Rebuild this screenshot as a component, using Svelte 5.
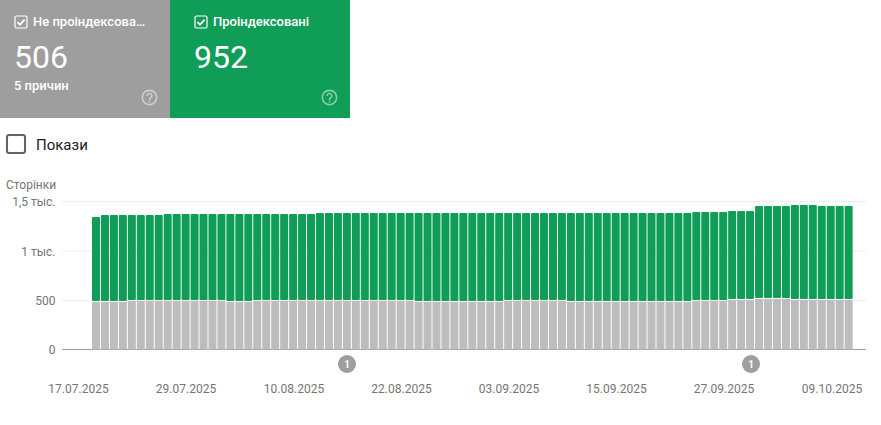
<script>
	const help =
		'M11 18h2v-2h-2v2zm1-16C6.48 2 2 6.48 2 12s4.48 10 10 10 10-4.48 10-10S17.52 2 12 2zm0 18c-4.41 0-8-3.59-8-8s3.59-8 8-8 8 3.59 8 8-3.59 8-8 8zm0-14c-2.21 0-4 1.79-4 4h2c0-1.1.9-2 2-2s2 .9 2 2c0 2-3 1.75-3 5h2c0-2.25 3-2.5 3-5 0-2.21-1.79-4-4-4z';

	const tiles = [
		{ title: 'Не проіндексовані', value: '506', note: '5 причин', cls: 'grey' },
		{ title: 'Проіндексовані', value: '952', note: '', cls: 'green' }
	];

	// [first bar index, pixel y] runs read off the chart
	const topRuns = [[0, 217], [1, 215], [8, 214], [25, 213], [67, 212], [71, 211], [74, 206], [78, 205], [81, 206]];
	const midRuns = [[0, 301], [4, 300], [15, 301], [18, 300], [36, 301], [46, 300], [53, 301], [67, 300], [71, 299], [74, 298], [78, 299]];

	const pick = (runs, i) => runs.filter((r) => r[0] <= i).pop()[1];
	const baseY = 179; // y of the zero line inside the svg

	const bars = Array.from({ length: 85 }, (_, i) => ({
		x: 92 + i * 8.96,
		top: pick(topRuns, i) - 170,
		mid: pick(midRuns, i) - 170
	}));

	const yTicks = [
		{ label: '1,5 тыс.', y: 31.5 },
		{ label: '1 тыс.', y: 81 },
		{ label: '500', y: 130.5 }
	];

	const dates = [
		['17.07.2025', 78.5],
		['29.07.2025', 186],
		['10.08.2025', 294],
		['22.08.2025', 401.5],
		['03.09.2025', 509],
		['15.09.2025', 616.5],
		['27.09.2025', 724],
		['09.10.2025', 832]
	];
</script>

<div class="page">
	<div class="tiles">
		{#each tiles as t}
			<div class="tile {t.cls}">
				<div class="head">
					<svg class="tick" width="14" height="14" viewBox="0 0 14 14">
						<rect x="1" y="1" width="12" height="12" rx="1.5" fill="none" stroke="#fff" stroke-width="1.2" />
						<path d="M3.4 7.2l2.6 2.5 4.6-5" fill="none" stroke="#fff" stroke-width="1.8" />
					</svg>
					<span class="title">{t.title}</span>
				</div>
				<div class="value">{t.value}</div>
				{#if t.note}<div class="note">{t.note}</div>{/if}
				<svg class="help" width="19" height="19" viewBox="0 0 24 24"><path d={help} fill="#fff" /></svg>
			</div>
		{/each}
	</div>

	<label class="toggle">
		<span class="box"></span>
		<span class="toggle-label">Покази</span>
	</label>

	<svg class="chart" width="881" height="235" viewBox="0 0 881 235">
		{#each yTicks as t}
			<line x1="62" x2="866" y1={t.y} y2={t.y} stroke="#eeeeee" />
			<text class="axis" x="55.5" y={t.y + 4.5} text-anchor="end">{t.label}</text>
		{/each}
		<text class="axis" x="6" y="19">Сторінки</text>
		<text class="axis" x="55.5" y={baseY + 5} text-anchor="end">0</text>

		<line x1="62" x2="866" y1={baseY + 0.5} y2={baseY + 0.5} stroke="#9e9e9e" />

		{#each bars as b}
			<rect x={b.x} y={b.top} width="8" height={b.mid - b.top} rx="1" fill="#0f9d58" />
			<rect x={b.x} y={b.mid + 1} width="8" height={baseY - b.mid - 0.5} fill="#bdbdbd" />
		{/each}

		{#each [347, 751] as cx}
			<circle {cx} cy="194" r="9" fill="#9e9e9e" />
			<text class="pin" x={cx} y="198" text-anchor="middle">1</text>
		{/each}

		{#each dates as [label, x]}
			<text class="axis" {x} y="223" text-anchor="middle">{label}</text>
		{/each}
	</svg>
</div>

<style>
	:global(body) {
		background: #fff;
	}
	.page {
		width: 881px;
		height: 425px;
		overflow: hidden;
		font-family: Roboto, 'Liberation Sans', sans-serif;
	}
	.tiles {
		display: flex;
	}
	.tile {
		position: relative;
		box-sizing: border-box;
		width: 180px;
		height: 118px;
		padding: 14px 24px 0;
		color: #fff;
	}
	.tile.grey {
		width: 170px;
		padding: 14px 24px 0 14px;
		background: #9e9e9e;
	}
	.tile.green {
		background: #0f9d58;
	}
	.head {
		display: flex;
		align-items: center;
		gap: 5px;
		height: 15px;
	}
	.tick {
		flex: none;
	}
	.title {
		overflow: hidden;
		font-size: 13px;
		font-weight: 500;
		white-space: nowrap;
		text-overflow: ellipsis;
	}
	.value {
		margin-top: 9px;
		font-size: 32px;
		line-height: 38px;
	}
	.note {
		margin-top: 2px;
		font-size: 13px;
		font-weight: 500;
		line-height: 16px;
	}
	.help {
		position: absolute;
		right: 11.5px;
		bottom: 11.5px;
		opacity: 0.5;
	}
	.toggle {
		display: flex;
		align-items: center;
		gap: 10px;
		height: 20px;
		margin: 16px 0 16px 6px;
		color: #212121;
		font-size: 15px;
	}
	.toggle-label {
		padding-top: 1px;
	}
	.box {
		box-sizing: border-box;
		width: 20px;
		height: 20px;
		border: 2px solid #5f6368;
		border-radius: 3px;
	}
	.chart {
		display: block;
	}
	.axis {
		fill: #757575;
		font-size: 12px;
	}
	.pin {
		fill: #fff;
		font-size: 10px;
		font-weight: 700;
	}
</style>
